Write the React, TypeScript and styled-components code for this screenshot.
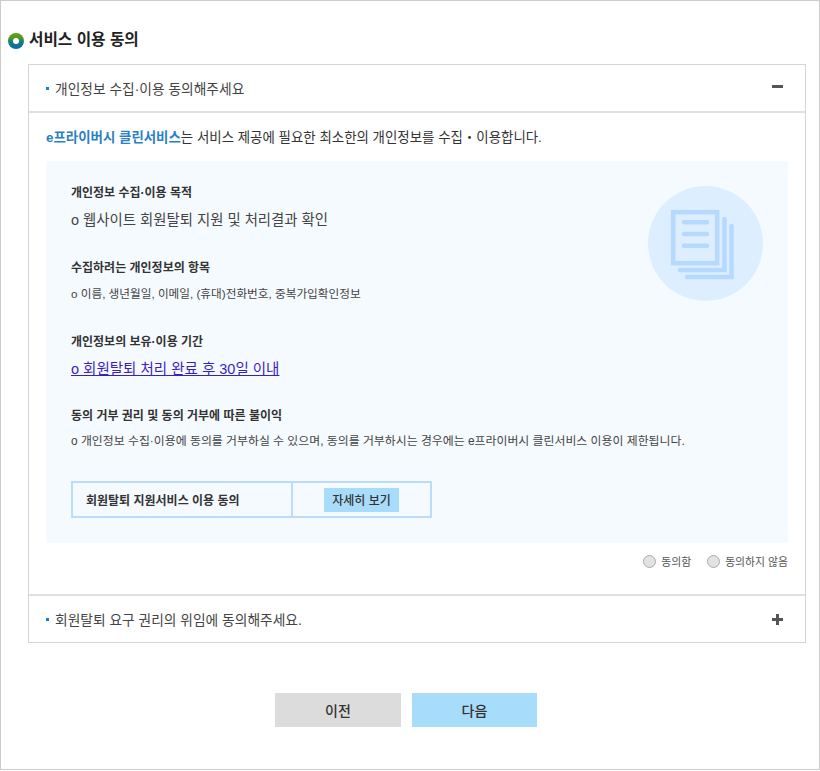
import styled, { createGlobalStyle } from 'styled-components';

const GlobalStyle = createGlobalStyle`
	html, body {
		margin: 0;
		padding: 0;
		background: #fff;
	}
	body {
		font-family: "Liberation Sans", "Noto Sans CJK KR", sans-serif;
		color: #333;
	}
`;

const Frame = styled.div`
	box-sizing: border-box;
	width: 820px;
	height: 770px;
	border: 1px solid #ccc;
	padding: 28px 13px 0 7px;
`;

const PageTitle = styled.h2`
	display: flex;
	align-items: center;
	gap: 5px;
	height: 22px;
	margin: 0 0 13px;
	font-size: 15.7px;
	line-height: 20px;
	font-weight: 700;
	color: #222;
`;

const Ring = styled.span`
	display: flex;
	align-items: center;
	justify-content: center;
	width: 16px;
	height: 16px;
	margin-top: 2px;
	border-radius: 50%;
	background: linear-gradient(#5a9e12 25%, #0f7a8e 60%, #0b6aa8);
	&::after {
		content: '';
		width: 6px;
		height: 6px;
		border-radius: 50%;
		background: #fff;
	}
`;

const Accordion = styled.section`
	margin-left: 20px;
	border: 1px solid #d5d5d5;
`;

const Header = styled.div<{ $open?: boolean }>`
	display: flex;
	align-items: center;
	justify-content: space-between;
	height: 46px;
	padding: 0 22px 0 17px;
	border-bottom: ${({ $open }) => ($open ? '2px solid #e0e0e0' : 'none')};
`;

const HeaderTitle = styled.span`
	display: flex;
	align-items: center;
	gap: 6px;
	font-size: 13.75px;
	color: #444;
	&::before {
		content: '';
		width: 3px;
		height: 3px;
		background: #1a7fd0;
	}
`;

const Toggle = styled.span`
	position: relative;
	width: 11px;
	height: 11px;
	&::before {
		content: '';
		position: absolute;
		left: 0;
		top: 4px;
		width: 11px;
		height: 3px;
		background: #555;
	}
`;

const MinusToggle = styled(Toggle)`
	margin-bottom: 4px;
`;

const PlusToggle = styled(Toggle)`
	&::after {
		content: '';
		position: absolute;
		left: 4px;
		top: 0;
		width: 3px;
		height: 11px;
		background: #555;
	}
`;

const Body = styled.div`
	padding: 14px 17px 0;
	border-bottom: 2px solid #e0e0e0;
`;

const Lead = styled.p`
	margin: 0 0 13px;
	height: 21px;
	line-height: 21px;
	font-size: 13.45px;
	color: #333;
	strong {
		font-weight: 700;
		color: #2a7fc9;
	}
`;

const InfoPanel = styled.div`
	position: relative;
	box-sizing: border-box;
	height: 382px;
	padding: 23px 25px 0;
	background: #f5faff;
`;

const Emblem = styled.svg`
	position: absolute;
	top: 25px;
	right: 25px;
`;

const Block = styled.div<{ $gap: number }>`
	margin-bottom: ${({ $gap }) => $gap}px;
`;

const BlockTitle = styled.h3<{ $gap?: number }>`
	margin: 0 0 ${({ $gap }) => $gap ?? 7}px;
	height: 18px;
	line-height: 18px;
	font-size: 12px;
	font-weight: 700;
	color: #333;
`;

const BlockText = styled.p<{ $size?: number }>`
	margin: 0;
	line-height: 20px;
	font-size: ${({ $size }) => $size ?? 11.65}px;
	color: #444;
`;

const LargeText = styled.p`
	margin: 0;
	line-height: 22px;
	font-size: 14.4px;
	color: #444;
`;

const BlockLink = styled.a`
	display: block;
	line-height: 22px;
	font-size: 14.5px;
	color: #3a1fc0;
	text-decoration: underline;
`;

const DetailTable = styled.div`
	display: flex;
	box-sizing: border-box;
	width: 361px;
	height: 37px;
	border: 2px solid #bcdcfb;
`;

const DetailLabel = styled.div`
	display: flex;
	align-items: center;
	box-sizing: border-box;
	width: 220px;
	padding-left: 13px;
	border-right: 2px solid #bcdcfb;
	font-size: 12px;
	font-weight: 700;
	color: #333;
`;

const DetailCell = styled.div`
	display: flex;
	flex: 1;
	align-items: center;
	justify-content: center;
`;

const DetailButton = styled.button`
	width: 75px;
	height: 24px;
	padding: 0;
	border: 0;
	background: #a8dcfb;
	font-family: inherit;
	font-size: 12px;
	font-weight: 500;
	color: #333;
`;

const ConsentRow = styled.div`
	display: flex;
	justify-content: flex-end;
	gap: 16px;
	height: 51px;
	padding-top: 10px;
	box-sizing: border-box;
`;

const ConsentOption = styled.label`
	display: flex;
	align-items: center;
	gap: 5px;
	height: 16px;
	font-size: 10.85px;
	color: #555;
`;

const RadioDot = styled.span`
	box-sizing: border-box;
	width: 13px;
	height: 13px;
	border-radius: 50%;
	border: 1px solid #aaa;
	background: #e2e2e2;
`;

const Actions = styled.div`
	display: flex;
	justify-content: center;
	gap: 11px;
	margin-top: 50px;
	padding-right: 2px;
`;

const ActionButton = styled.button<{ $primary?: boolean }>`
	width: ${({ $primary }) => ($primary ? 125 : 126)}px;
	height: 34px;
	padding: 0;
	border: 0;
	background: ${({ $primary }) => ($primary ? '#a8dcfb' : '#dcdcdc')};
	font-family: inherit;
	font-size: 14px;
	font-weight: 500;
	color: #333;
`;

function App() {
	return (
		<>
			<GlobalStyle />
			<Frame>
				<PageTitle>
					<Ring />
					서비스 이용 동의
				</PageTitle>
				<Accordion>
					<Header $open>
						<HeaderTitle>개인정보 수집·이용 동의해주세요</HeaderTitle>
						<MinusToggle />
					</Header>
					<Body>
						<Lead>
							<strong>e프라이버시 클린서비스</strong>는 서비스 제공에 필요한 최소한의 개인정보를 수집・이용합니다.
						</Lead>
						<InfoPanel>
							<Emblem width="115" height="115" viewBox="0 0 115 115">
								<circle cx="57.5" cy="57.5" r="57.5" fill="#dceeff" />
								<g fill="none" stroke="#b5d9ff" strokeWidth="4.5">
									<rect x="25.2" y="26.2" width="44" height="51" />
									<path d="M76.5 33 V84 H32" strokeLinecap="round" />
									<path d="M83.5 40 V91 H39" strokeLinecap="round" />
									<path d="M36 36.3 H59 M36 48 H59 M36 59.7 H59" strokeLinecap="round" />
								</g>
							</Emblem>
							<Block $gap={28}>
								<BlockTitle>개인정보 수집·이용 목적</BlockTitle>
								<LargeText>o 웹사이트 회원탈퇴 지원 및 처리결과 확인</LargeText>
							</Block>
							<Block $gap={29}>
								<BlockTitle>수집하려는 개인정보의 항목</BlockTitle>
								<BlockText>o 이름, 생년월일, 이메일, (휴대)전화번호, 중복가입확인정보</BlockText>
							</Block>
							<Block $gap={27}>
								<BlockTitle>개인정보의 보유·이용 기간</BlockTitle>
								<BlockLink href="#">o 회원탈퇴 처리 완료 후 30일 이내</BlockLink>
							</Block>
							<Block $gap={30}>
								<BlockTitle $gap={6}>동의 거부 권리 및 동의 거부에 따른 불이익</BlockTitle>
								<BlockText $size={11.9}>
									o 개인정보 수집·이용에 동의를 거부하실 수 있으며, 동의를 거부하시는 경우에는 e프라이버시 클린서비스 이용이 제한됩니다.
								</BlockText>
							</Block>
							<DetailTable>
								<DetailLabel>회원탈퇴 지원서비스 이용 동의</DetailLabel>
								<DetailCell>
									<DetailButton>자세히 보기</DetailButton>
								</DetailCell>
							</DetailTable>
						</InfoPanel>
						<ConsentRow>
							<ConsentOption>
								<RadioDot />
								동의함
							</ConsentOption>
							<ConsentOption>
								<RadioDot />
								동의하지 않음
							</ConsentOption>
						</ConsentRow>
					</Body>
					<Header>
						<HeaderTitle>회원탈퇴 요구 권리의 위임에 동의해주세요.</HeaderTitle>
						<PlusToggle />
					</Header>
				</Accordion>
				<Actions>
					<ActionButton>이전</ActionButton>
					<ActionButton $primary>다음</ActionButton>
				</Actions>
			</Frame>
		</>
	);
}

export default App;
